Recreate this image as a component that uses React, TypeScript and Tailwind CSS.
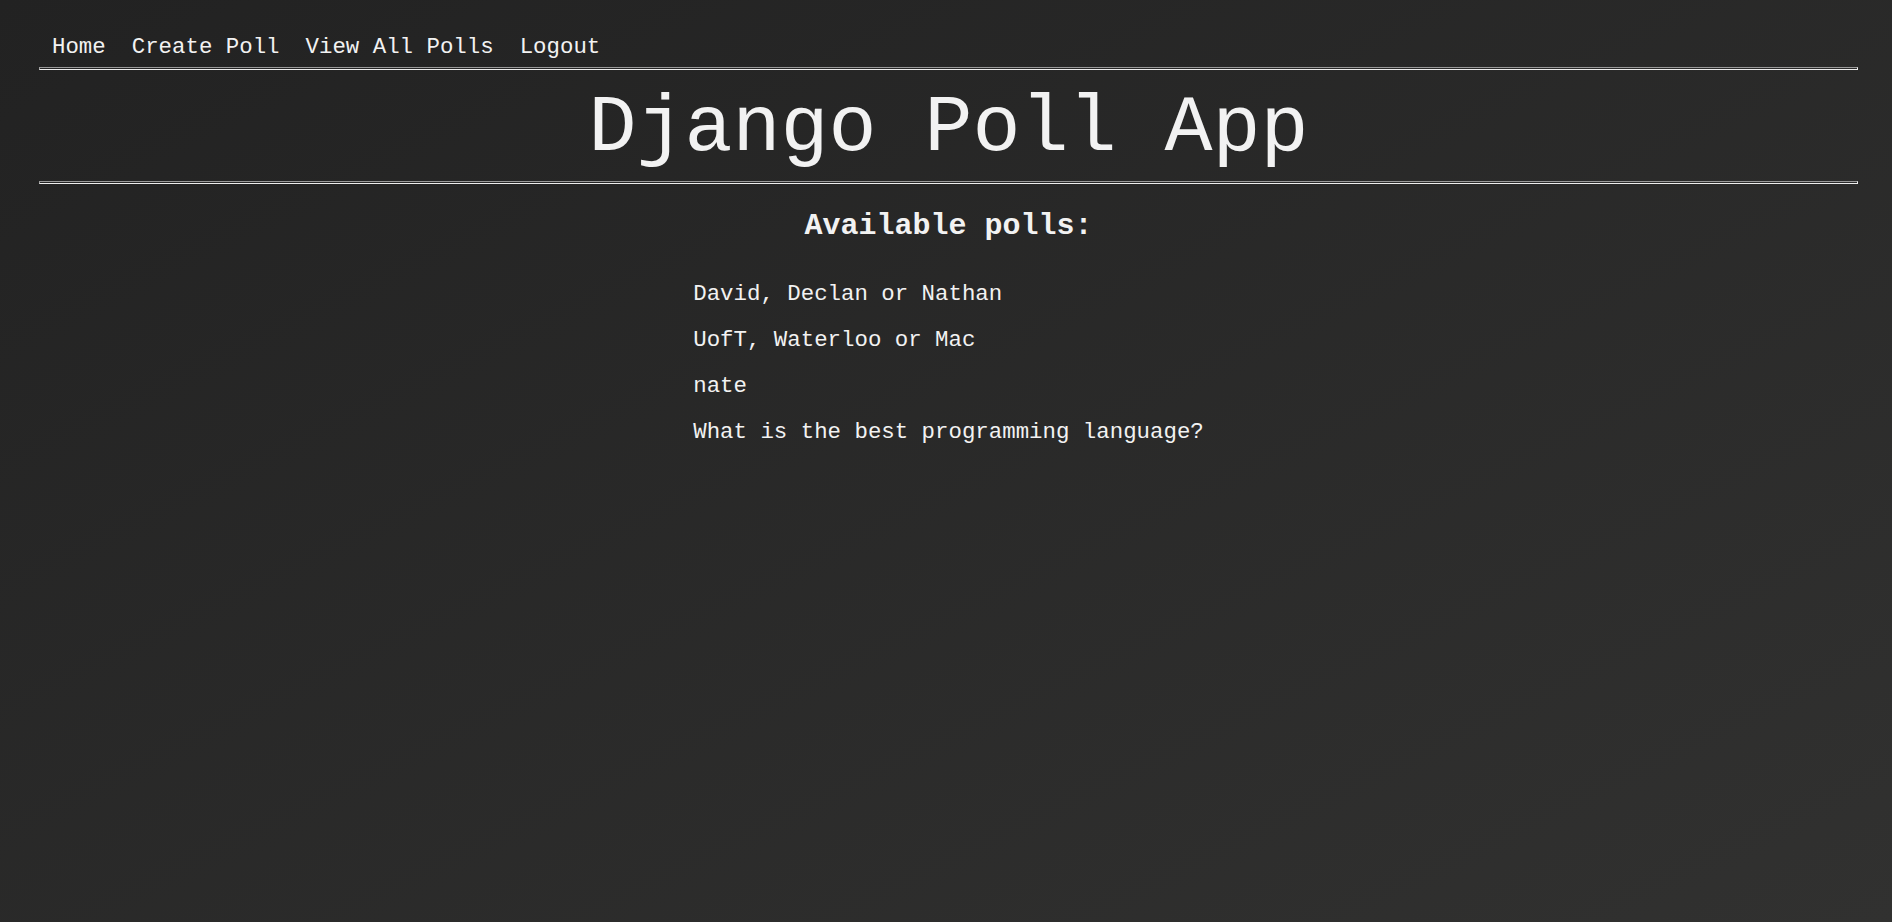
import React from 'react';

const links = ['Home', 'Create Poll', 'View All Polls', 'Logout'];

const polls = [
  'David, Declan or Nathan',
  'UofT, Waterloo or Mac',
  'nate',
  'What is the best programming language?',
];

// plain browser-style inset <hr>
const Rule = () => (
  <div className="h-[3px] border border-t-[#9a9a9a] border-l-[#9a9a9a] border-b-[#ededed] border-r-[#ededed]" />
);

export default function App() {
  return (
    <div className="min-h-screen bg-[linear-gradient(to_bottom_right,#222222,#313130)] text-[#f2f2f2] font-['Courier_New','Liberation_Mono',monospace]">
      <div className="ml-[39px] mr-[34px]">
        <nav className="flex pt-[34px] pb-[7px]">
          {links.map(l => (
            <a key={l} href="#" className="px-[13px] text-[22.4px] leading-[26px] whitespace-pre">
              {l}
            </a>
          ))}
        </nav>
        <Rule />
        <h1 className="text-center text-[80px] leading-[105px] pt-[6px] whitespace-pre">Django Poll App</h1>
        <Rule />
        <h2 className="mt-[24px] text-center text-[30px] leading-[36px] font-bold">Available polls:</h2>
        <div className="flex justify-center mt-[27px]">
          <ul className="flex flex-col">
            {polls.map(p => (
              <li key={p} className="text-[22.4px] leading-[46px] whitespace-pre">
                <a href="#">{p}</a>
              </li>
            ))}
          </ul>
        </div>
      </div>
    </div>
  );
}
